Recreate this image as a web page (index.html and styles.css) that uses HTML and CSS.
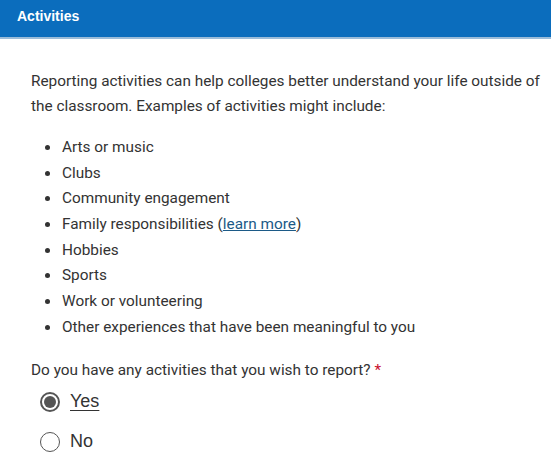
FILE: index.html
```html
<!DOCTYPE html>
<html>
  <head>
    <title>Activities</title>
    <link rel="stylesheet" href="styles.css">
  </head>
  <body>
    <div class="panel-header">
      <h1>Activities</h1>
    </div>

    <div class="panel-body">
      <p class="intro">
        Reporting activities can help colleges better understand your life outside of
        the classroom. Examples of activities might include:
      </p>

      <ul class="examples">
        <li>Arts or music</li>
        <li>Clubs</li>
        <li>Community engagement</li>
        <li>Family responsibilities (<a href="#">learn more</a>)</li>
        <li>Hobbies</li>
        <li>Sports</li>
        <li>Work or volunteering</li>
        <li>Other experiences that have been meaningful to you</li>
      </ul>

      <fieldset class="question">
        <legend>Do you have any activities that you wish to report? <span class="required">*</span></legend>
        <label class="radio-option">
          <span class="radio checked"></span>
          <span class="radio-label focused">Yes</span>
        </label>
        <label class="radio-option">
          <span class="radio"></span>
          <span class="radio-label">No</span>
        </label>
      </fieldset>
    </div>
  </body>
</html>
```

FILE: styles.css
```css
body {
  margin: 0;
  background-color: #ffffff;
  color: #333333;
  font-family: Roboto, "Liberation Sans", sans-serif;
}

.panel-header {
  background-color: #0b6dbd;
  height: 37px;
  border-bottom: 2px solid #9bbcd9;
  box-sizing: content-box;
  display: flex;
  align-items: center;
  padding-left: 17px;
}

.panel-header h1 {
  margin: 0;
  color: #ffffff;
  font-family: "Liberation Sans", Arial, sans-serif;
  font-size: 14px;
  font-weight: bold;
  position: relative;
  top: -3px;
}

.panel-body {
  padding: 30px 6px 0 31px;
  font-size: 15.35px;
}

.intro {
  margin: 0;
  line-height: 25px;
}

.examples {
  margin: 15px 0 0 0;
  padding-left: 31px;
}

.examples li {
  height: 25.7px;
  line-height: 25.7px;
}

.examples li::marker {
  font-size: 17px;
}

.examples a {
  color: #1c5a87;
  text-decoration: underline;
}

.question {
  border: none;
  margin: 20px 0 0 0;
  padding: 0;
}

.question legend {
  padding: 0;
  line-height: 20px;
}

.required {
  color: #c8102e;
}

.radio-option {
  display: flex;
  align-items: center;
  gap: 10px;
  height: 40px;
  padding-left: 9px;
}

.radio-option:first-of-type {
  margin-top: 2px;
}

.radio {
  width: 20px;
  height: 20px;
  border: 1px solid #555555;
  border-radius: 50%;
  box-sizing: border-box;
  display: flex;
  align-items: center;
  justify-content: center;
}

.radio.checked {
  border: 2px solid #555555;
}

.radio.checked::after {
  content: "";
  width: 12px;
  height: 12px;
  border-radius: 50%;
  background-color: #555555;
}

.radio-label {
  font-family: "Liberation Sans", Arial, sans-serif;
  font-size: 18px;
  color: #333333;
}

.radio-label.focused {
  text-decoration: underline;
  text-underline-offset: 3px;
}
```
